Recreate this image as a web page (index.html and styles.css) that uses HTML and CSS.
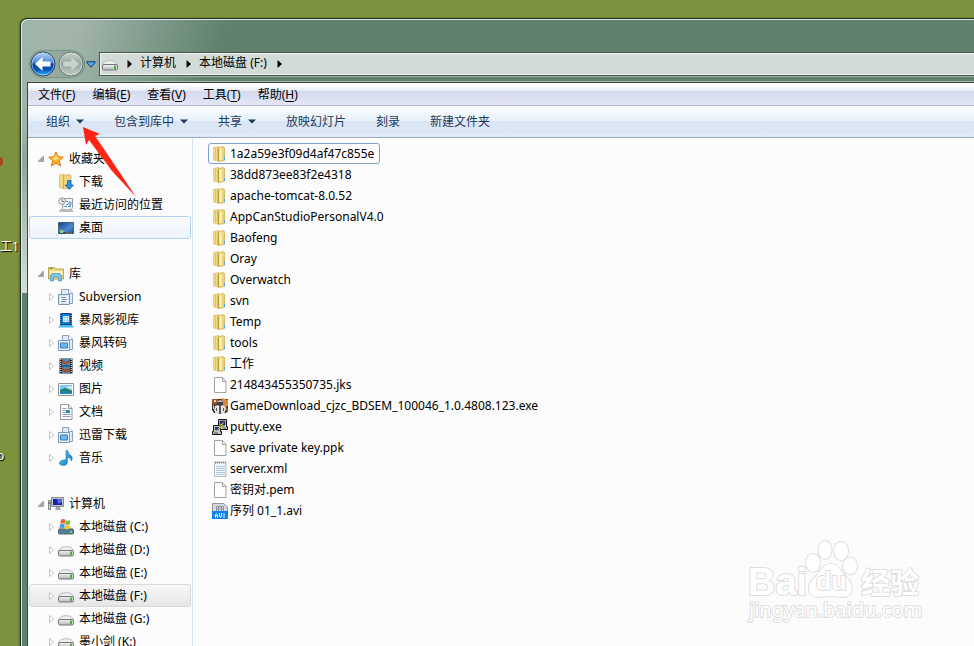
FILE: index.html
```
<!DOCTYPE html>
<html lang="zh-CN">
<head>
<meta charset="utf-8">
<title>本地磁盘 (F:)</title>
<link rel="stylesheet" href="styles.css">
</head>
<body>
<svg class="sprite" aria-hidden="true">
  <defs>
    <linearGradient id="gold" x2="1"><stop offset="0" stop-color="#f8eaa0"/><stop offset=".45" stop-color="#e2c264"/><stop offset=".5" stop-color="#f7e69c"/><stop offset="1" stop-color="#e0b84e"/></linearGradient>
    <linearGradient id="metal" x2="0" y2="1"><stop offset="0" stop-color="#f4f4f6"/><stop offset="1" stop-color="#b4b4bc"/></linearGradient>
    <linearGradient id="blue" x2="0" y2="1"><stop offset="0" stop-color="#b9d8f7"/><stop offset=".45" stop-color="#4b86d4"/><stop offset=".5" stop-color="#0b3fa0"/><stop offset=".75" stop-color="#0a55c2"/><stop offset="1" stop-color="#38c4f6"/></linearGradient>
    <linearGradient id="grey" x2="0" y2="1"><stop offset="0" stop-color="#c9d3cd"/><stop offset=".5" stop-color="#93a69b"/><stop offset="1" stop-color="#c3cec7"/></linearGradient>
    <linearGradient id="note" x2="1" y2="1"><stop offset="0" stop-color="#5cc0f0"/><stop offset="1" stop-color="#1276bd"/></linearGradient>
    <linearGradient id="screen" x2="1" y2="1"><stop offset="0" stop-color="#183c88"/><stop offset=".6" stop-color="#4f8ad4"/><stop offset="1" stop-color="#1e4b98"/></linearGradient>
  </defs>
  <symbol id="folder" viewBox="0 0 16 16"><path d="M1.500 1.500l5-1v14.500l-5-1z" fill="url(#gold)" stroke="#dcc273" stroke-width=".7"/><path d="M6 2l5-1.500 1.500 1v13L6 15.500z" fill="#eed681" stroke="#cda84a" stroke-width=".7"/><path d="M6.500 3v12" stroke="#c29b3d"/><path d="M8.500 2.500v11.500" stroke="#fff4b8" stroke-width="2"/><path d="M12.300 6.500v7" stroke="#d2bb70" stroke-width="1.200"/><path d="M12.500 11v3" stroke="#58a7dc"/></symbol>
  <symbol id="file" viewBox="0 0 16 16"><path d="M2.500.5h8l3.500 3.500v11.500h-11.500z" fill="#fdfdfd" stroke="#a2a2a2"/><path d="M10.500.5v4h3.500" fill="#eee" stroke="#a2a2a2"/></symbol>
  <symbol id="notes" viewBox="0 0 16 16"><path d="M2.500 1.500h11.500v14h-11.500z" fill="#f4f8fc" stroke="#b3b9be"/><path d="M4 5.500h9M4 7.500h9M4 9.500h9M4 11.500h9M4 13.500h9" stroke="#a6c9df"/><path d="M3 1.500h11" stroke="#888" stroke-width="2" stroke-dasharray="1 1"/></symbol>
  <symbol id="avi" viewBox="0 0 16 16"><path d="M.5 8V.5h11l4 3.500v4" fill="#d4d9df" stroke="#8d949c"/><path d="M4.500 3.500h7v5h-7zM6.500 3.500v5M9.500 3.500v5M4.500 6h7" fill="none" stroke="#8d949c"/><path d="M0 8h16v8H0z" fill="#1082ee"/><path d="M3.500 14.500v-3l1-1 1 1v3M3.500 12.500h2M7.500 10v3l1 1.500 1-1.500v-3M12 10v5" fill="none" stroke="#fff"/></symbol>
  <symbol id="game" viewBox="0 0 16 16"><path d="M0 1h16v12l-2 2H2l-2-3z" fill="#3a2a26"/><path d="M0 1h6v4l-4 2-2-2z" fill="#9a5a2c"/><path d="M10 0l6 2v6l-3 1-4-4z" fill="#d88832"/><path d="M12 8l4 2v4l-3-2z" fill="#a7481e"/><path d="M5 4q3-4 6 0v3H5z" fill="#b6bcc2"/><path d="M5 4h6v3H5z" fill="#3c434c"/><path d="M3 8l3-1 2 2 2-2 3 1 1 3-2 5H4l-2-4z" fill="#e2e3e6"/><path d="M7 9h2v7H7zM4 10h1v3H4zM11 10h1v3h-1z" fill="#58575c"/><path d="M1 7h1v4H1zM2 2h2v2H2z" fill="#dbcbbc"/></symbol>
  <symbol id="putty" viewBox="0 0 16 16"><path d="M6.500.5h8v7h1v3h-9z" fill="#c4c4c4" stroke="#111"/><path d="M8 2h5v4H8z" fill="#1830a0" stroke="#222" stroke-width=".5"/><path d="M1.500 6.500h7v6h1v3h-9v-3h1z" fill="#c4c4c4" stroke="#111"/><path d="M3 8h4v3H3z" fill="#1830a0"/><path d="M2 14h4M11 9h3" stroke="#555"/><path d="M13 2.500L6.500 6.500h3L3.500 12l8-4.500h-3z" fill="#fff22a" stroke="#554d00" stroke-width=".3"/></symbol>
  <symbol id="star" viewBox="0 0 16 16"><path d="M8 .8l2.100 4.900 5.200.5-4 3.500 1.300 5.300L8 12.200 3.400 15l1.300-5.300-4-3.500 5.200-.5z" fill="#ffb02b" stroke="#d97a18"/><path d="M8 3l1.300 3.600 3.400.4-6 2-3.200-2 3.200-.4z" fill="#ffe07a"/></symbol>
  <symbol id="download" viewBox="0 0 16 16"><path d="M1.500 1l4-.5v14l-4-1z" fill="url(#gold)" stroke="#d1ad55" stroke-width=".7"/><path d="M5.500 1.500l5-1 2.500 1v12l-7.500 1.500z" fill="#eed681" stroke="#cda84a" stroke-width=".7"/><path d="M9.500 6.500h3.500v4.500h2.500l-4.200 4.500L7 11h2.500z" fill="#2a93e0" stroke="#1767b0" stroke-width=".8"/></symbol>
  <symbol id="recent" viewBox="0 0 16 16"><path d="M5.500 1.500h9v9l-2 4h-10l2-3z" fill="#f2f4f6" stroke="#959ba2"/><path d="M8 4.500h2M11 5h2v3h-2zM8 7.500h2M6 9.500h3M10 9.500h3" stroke="#4e94cc" fill="none"/><path d="M2 12h12l1.500 3H1z" fill="#b9bdc2"/><circle cx="4" cy="4" r="3.300" fill="#f4f5f6" stroke="#8f959c"/><path d="M4 2v2.500h2" fill="none" stroke="#666"/></symbol>
  <symbol id="desktop" viewBox="0 0 16 16"><path d="M.5 2.500h15v11H.5z" fill="url(#screen)" stroke="#55606f"/><path d="M1 12h14v1.500H1z" fill="#2f3a49"/><path d="M1.500 9.500h2v1.500h1.500v2H2z" fill="#55cae8"/><path d="M3.500 10.500h2v2h-2z" fill="#f8c93c"/><path d="M7 13h7" stroke="#9fb0c0" stroke-width=".6"/></symbol>
  <symbol id="library" viewBox="0 0 16 16"><path d="M.5 1.500h6l1 1.500h8v10H.5z" fill="#efd683" stroke="#c3a24c"/><path d="M2 5h13v4H2z" fill="#fff3b3"/><path d="M1.500 2.500h3" stroke="#4da64c"/><path d="M2.500 15v-5.500l1.500-2h8l1.500 2V15h-3v-4h-5v4z" fill="#7bc5ed" stroke="#4e9ccb" stroke-width=".8"/></symbol>
  <symbol id="liblist" viewBox="0 0 16 16"><path d="M3.500 5V.5h7l4 3.500v10.500h-4" fill="#e2ecf6" stroke="#8ba3bd"/><path d="M10.500.5v4h4" fill="#fff" stroke="#8ba3bd"/><path d="M.5 5.500h11v10H.5z" fill="#d9e7f4" stroke="#7997b7"/><path d="M2 7.500h8v6H2z" fill="#f6f9fd"/><path d="M3 8.500h5M4 10.500h5M3 12.500h5" stroke="#7487bc"/></symbol>
  <symbol id="libpic" viewBox="0 0 16 16"><path d="M4.500 5V.5h6l4 3.500v10.500h-4" fill="#e2ecf6" stroke="#8ba3bd"/><path d="M10.500.5v4h4" fill="#fff" stroke="#8ba3bd"/><path d="M.5 5.500h11v10H.5z" fill="#e6f0f9" stroke="#7997b7"/><path d="M2.500 8h7v5h-7z" fill="#6ab6ee" stroke="#3c83bd"/></symbol>
  <symbol id="storm" viewBox="0 0 16 16"><path d="M2 1h12v12H2z" fill="#17436e"/><path d="M2.800 1v11M13.200 1v11" stroke="#9fc6e6" stroke-dasharray="1 1"/><path d="M4 2h8v10H4z" fill="#137bdd"/><path d="M5.500 4.500h5v5h-5zM8 4.500v5M5.500 7h5" fill="#79c6ff" stroke="#fff" stroke-width=".8"/><path d="M2 13h12l2 2.500H0z" fill="#49baf3"/></symbol>
  <symbol id="video" viewBox="0 0 16 16"><path d="M1.500.5h13v15h-13z" fill="#22292d"/><path d="M2.700 1v14M13.300 1v14" stroke="#e1e5e7" stroke-width="1.200" stroke-dasharray="1 1"/><path d="M4 1h8v6.500H4zM4 8.500h8V15H4z" fill="#3994d3"/><path d="M4 1l4 3 4-3v3L8 7 4 5zM4 9l3 2 5-1v3l-4 2-4-2z" fill="#9c5038"/></symbol>
  <symbol id="picture" viewBox="0 0 16 16"><path d="M.5 2.500h15v12H.5z" fill="#fff" stroke="#8d9499"/><path d="M2 4h12v9H2z" fill="#79c9ef"/><path d="M2 9l5-2 7 3v3H2z" fill="#27785d"/><path d="M2 11q6-3 12 1v1H2z" fill="#1b87b7"/><path d="M8 6l4-1 2 1v2z" fill="#dff5ff"/></symbol>
  <symbol id="document" viewBox="0 0 16 16"><path d="M2.500.5h8l3.500 3.500v11.500h-11.500z" fill="#fdfdfd" stroke="#8f979f"/><path d="M10.500.5v4h3.500" fill="#eee" stroke="#8f979f"/><path d="M4.500 4.500h4M4.500 6.500h3M4.500 8.500h3M4.500 10.500h8M4.500 12.500h8" stroke="#939dc5"/><path d="M8 6h4v3H8z" fill="#2789bd"/></symbol>
  <symbol id="music" viewBox="0 0 16 16"><path d="M8 .5h1.500q.5 3 3 4.500 3 2.500 1 6-.5-3-4-4v4.500q0 4-4 4T1.500 13q.5-3.500 6.500-3z" fill="url(#note)" stroke="#2488c6" stroke-width=".7"/></symbol>
  <symbol id="computer" viewBox="0 0 16 16"><path d="M3.500 1.500h12v9h-12z" fill="#bfc3c8" stroke="#888e95"/><path d="M5 3h9v6H5z" fill="#1620a8"/><path d="M9 3h5v3l-4 2z" fill="#5068e2"/><path d="M8 11h4l1 3H7z" fill="#a4a8ae"/><path d="M.5 4.500h2v9h-2z" fill="#dadcda" stroke="#7e8781"/><path d="M1.500 6v2" stroke="#37a53a"/></symbol>
  <symbol id="drive" viewBox="0 0 16 16"><path d="M3 5.500q5-2 10 0l2.500 3h-15z" fill="#eeeef0" stroke="#b0b0b6" stroke-width=".8"/><rect x=".5" y="8.500" width="15" height="5.500" rx="1.500" fill="url(#metal)" stroke="#77777f"/><path d="M12 9.500h2v3.500h-2z" fill="#49b52f"/></symbol>
  <symbol id="system" viewBox="0 0 16 16"><path d="M2 8l2-1h8l3 3H.5z" fill="#c9d1d8"/><rect x=".5" y="10" width="15" height="5" rx="1" fill="#507f9a" stroke="#60676e"/><path d="M12 12h2v2h-2z" fill="#5be35c"/><path d="M3 .8q2-1.500 4.500 0L6.800 4.800q-2-1.200-4.500 0z" fill="#e9642f"/><path d="M8 1.200q2 1 4.500 0l-.8 4q-2 1-4.500 0z" fill="#77bb3e"/><path d="M2.200 5.300q2-1 4.500 0L6 9.200q-2-1.200-4.500 0z" fill="#4a9be2"/><path d="M7.200 5.700q2 1 4.500 0L11 9.800q-2 1-4.500 0z" fill="#f8c832"/></symbol>
  <symbol id="open" viewBox="0 0 8 8"><path d="M6.500 1v5.500H1z" fill="#a5a5a5" stroke="#8c8c8c" stroke-width=".6"/></symbol>
  <symbol id="closed" viewBox="0 0 8 8"><path d="M2.500.5l4 3.500-4 3.500z" fill="#fff" stroke="#c4c4c4"/></symbol>
  <symbol id="down" viewBox="0 0 8 5"><path d="M0 .5h8L4 4.500z" fill="#1e395b"/></symbol>
  <symbol id="right" viewBox="0 0 5 8"><path d="M.5 0v8l4.500-4z" fill="#000"/></symbol>
</svg>

<div class="desk" aria-hidden="true"><i class="spot"></i><span class="label tool">工1</span><span class="label ring">o</span></div>

<main class="window">
  <header class="bar">
    <div class="travel">
      <button aria-label="后退"><svg viewBox="0 0 26 26"><circle cx="13" cy="13" r="12" fill="url(#blue)" stroke="#28486c"/><circle cx="13" cy="13" r="11" fill="none" stroke="#c5dcf5" opacity=".6"/><path d="M5 13l7.500-7v4.500h8v5h-8V20z" fill="#fff"/></svg></button>
      <button aria-label="前进"><svg viewBox="0 0 26 26"><circle cx="13" cy="13" r="12" fill="url(#grey)" stroke="#617168"/><circle cx="13" cy="13" r="11" fill="none" stroke="#dce4df" opacity=".7"/><path d="M21 13l-7.500-7v4.500h-8v5h8V20z" fill="#c9d3cc"/></svg></button>
    </div>
    <button class="recent" aria-label="最近的页面"><svg viewBox="0 0 10 7"><path d="M.8.7h8.400v1L5 6.200.8 1.700z" fill="#4aa5e8" stroke="#173f70"/></svg></button>
    <nav class="address" aria-label="地址">
      <svg class="icon"><use href="#drive"/></svg>
      <svg class="right"><use href="#right"/></svg><a href="#">计算机</a>
      <svg class="right"><use href="#right"/></svg><a href="#">本地磁盘 (F:)</a>
      <svg class="right"><use href="#right"/></svg>
    </nav>
  </header>

  <div class="client">
    <nav class="menu" aria-label="菜单">
      <button>文件(<u>F</u>)</button><button>编辑(<u>E</u>)</button><button>查看(<u>V</u>)</button><button>工具(<u>T</u>)</button><button>帮助(<u>H</u>)</button>
    </nav>
    <div class="tools">
      <button>组织<svg><use href="#down"/></svg></button><button>包含到库中<svg><use href="#down"/></svg></button><button>共享<svg><use href="#down"/></svg></button><button>放映幻灯片</button><button>刻录</button><button>新建文件夹</button>
    </div>
    <div class="panes">
      <nav class="tree" aria-label="导航窗格">
        <section>
          <a href="#" class="root"><svg class="twist"><use href="#open"/></svg><svg class="icon"><use href="#star"/></svg>收藏夹</a>
          <a href="#" class="leaf"><svg class="icon"><use href="#download"/></svg>下载</a>
          <a href="#" class="leaf"><svg class="icon"><use href="#recent"/></svg>最近访问的位置</a>
          <a href="#" class="leaf hot"><svg class="icon"><use href="#desktop"/></svg>桌面</a>
        </section>
        <section>
          <a href="#" class="root"><svg class="twist"><use href="#open"/></svg><svg class="icon"><use href="#library"/></svg>库</a>
          <a href="#"><svg class="twist"><use href="#closed"/></svg><svg class="icon"><use href="#liblist"/></svg>Subversion</a>
          <a href="#"><svg class="twist"><use href="#closed"/></svg><svg class="icon"><use href="#storm"/></svg>暴风影视库</a>
          <a href="#"><svg class="twist"><use href="#closed"/></svg><svg class="icon"><use href="#libpic"/></svg>暴风转码</a>
          <a href="#"><svg class="twist"><use href="#closed"/></svg><svg class="icon"><use href="#video"/></svg>视频</a>
          <a href="#"><svg class="twist"><use href="#closed"/></svg><svg class="icon"><use href="#picture"/></svg>图片</a>
          <a href="#"><svg class="twist"><use href="#closed"/></svg><svg class="icon"><use href="#document"/></svg>文档</a>
          <a href="#"><svg class="twist"><use href="#closed"/></svg><svg class="icon"><use href="#libpic"/></svg>迅雷下载</a>
          <a href="#"><svg class="twist"><use href="#closed"/></svg><svg class="icon"><use href="#music"/></svg>音乐</a>
        </section>
        <section>
          <a href="#" class="root"><svg class="twist"><use href="#open"/></svg><svg class="icon"><use href="#computer"/></svg>计算机</a>
          <a href="#"><svg class="twist"><use href="#closed"/></svg><svg class="icon"><use href="#system"/></svg>本地磁盘 (C:)</a>
          <a href="#"><svg class="twist"><use href="#closed"/></svg><svg class="icon"><use href="#drive"/></svg>本地磁盘 (D:)</a>
          <a href="#"><svg class="twist"><use href="#closed"/></svg><svg class="icon"><use href="#drive"/></svg>本地磁盘 (E:)</a>
          <a href="#" class="current"><svg class="twist"><use href="#closed"/></svg><svg class="icon"><use href="#drive"/></svg>本地磁盘 (F:)</a>
          <a href="#"><svg class="twist"><use href="#closed"/></svg><svg class="icon"><use href="#drive"/></svg>本地磁盘 (G:)</a>
          <a href="#"><svg class="twist"><use href="#closed"/></svg><svg class="icon"><use href="#drive"/></svg>墨小剑 (K:)</a>
        </section>
      </nav>
      <ul class="files">
        <li><a href="#" class="focus"><svg class="icon"><use href="#folder"/></svg>1a2a59e3f09d4af47c855e</a></li>
        <li><a href="#"><svg class="icon"><use href="#folder"/></svg>38dd873ee83f2e4318</a></li>
        <li><a href="#"><svg class="icon"><use href="#folder"/></svg>apache-tomcat-8.0.52</a></li>
        <li><a href="#"><svg class="icon"><use href="#folder"/></svg>AppCanStudioPersonalV4.0</a></li>
        <li><a href="#"><svg class="icon"><use href="#folder"/></svg>Baofeng</a></li>
        <li><a href="#"><svg class="icon"><use href="#folder"/></svg>Oray</a></li>
        <li><a href="#"><svg class="icon"><use href="#folder"/></svg>Overwatch</a></li>
        <li><a href="#"><svg class="icon"><use href="#folder"/></svg>svn</a></li>
        <li><a href="#"><svg class="icon"><use href="#folder"/></svg>Temp</a></li>
        <li><a href="#"><svg class="icon"><use href="#folder"/></svg>tools</a></li>
        <li><a href="#"><svg class="icon"><use href="#folder"/></svg>工作</a></li>
        <li><a href="#"><svg class="icon"><use href="#file"/></svg>214843455350735.jks</a></li>
        <li><a href="#"><svg class="icon"><use href="#game"/></svg>GameDownload_cjzc_BDSEM_100046_1.0.4808.123.exe</a></li>
        <li><a href="#"><svg class="icon"><use href="#putty"/></svg>putty.exe</a></li>
        <li><a href="#"><svg class="icon"><use href="#file"/></svg>save private key.ppk</a></li>
        <li><a href="#"><svg class="icon"><use href="#notes"/></svg>server.xml</a></li>
        <li><a href="#"><svg class="icon"><use href="#file"/></svg>密钥对.pem</a></li>
        <li><a href="#"><svg class="icon"><use href="#avi"/></svg>序列 01_1.avi</a></li>
      </ul>
    </div>
  </div>
</main>

<svg class="pointer" viewBox="0 0 54 72" aria-hidden="true"><path d="M1 1l17 7-5 2 13 19 28 42L30 45 7 14l-3 5z" fill="#ff2414"/></svg>

<svg class="mark" viewBox="0 0 184 90">
  <g class="ink">
    <ellipse cx="70" cy="33" rx="7" ry="9"/><ellipse cx="82" cy="20" rx="6.500" ry="9"/><ellipse cx="98" cy="21" rx="7" ry="9"/><ellipse cx="107" cy="36" rx="7" ry="8.500"/>
    <path d="M88 34c8 0 10 8 16 14 6 5 8 18-3 19-5 0-8-1-13-1s-9 1-14 1c-11-1-9-14-3-19 7-6 9-14 17-14z"/>
    <text x="5" y="65" class="big">Bai</text><text x="73" y="60" class="du">du</text><text x="118" y="64" class="cn">经验</text><text x="6" y="87" class="url">jingyan.baidu.com</text>
  </g>
</svg>
</body>
</html>
```
FILE: styles.css
```
* { box-sizing: border-box; }

body {
  margin: 0;
  height: 100vh;
  padding: 18px 0 0 20px;
  overflow: hidden;
  position: relative;
  background: #7c923c;
  color: #000;
  font: 12px/20px "Noto Sans", "Noto Sans CJK SC", sans-serif;
}

a { color: inherit; text-decoration: none; }

button {
  padding: 0;
  border: 0;
  background: none;
  color: inherit;
  font: inherit;
}

svg { display: block; flex: none; }
.sprite { position: absolute; width: 0; height: 0; }
.icon { width: 16px; height: 16px; }

/* Window frame */
.window {
  height: 100%;
  display: flex;
  flex-direction: column;
  padding-left: 6px;
  border: solid #1f2f27;
  border-width: 1px 0 0 1px;
  border-radius: 7px 0 0 0;
  box-shadow: inset 1px 1px #dde8e1, -1px 0 2px #5b6c2e;
  background:
    linear-gradient(#c3cfc800 110px, #8ea699 140px, #d5dfd9 274px, #5f816d 274px) 0 0 / 6px 100% no-repeat,
    linear-gradient(105deg, #a0b4a8 60px, #5f816d 200px);
}

.bar {
  display: flex;
  align-items: center;
  padding: 32px 0 5px 3px;
}

.travel {
  display: flex;
  gap: 2px;
  border-radius: 13px;
  background: #8a9e9280;
  box-shadow: 0 0 1px 1px #7d9286;
}

.travel svg { width: 26px; height: 26px; }
.recent { padding: 0 3px 0 2px; }
.recent svg { width: 10px; height: 7px; }

.address {
  flex: 1;
  height: 24px;
  display: flex;
  align-items: center;
  padding-left: 2px;
  border: solid #46534c;
  border-width: 1px 0 1px 1px;
  box-shadow: inset 1px 1px #f4f7f5, inset 0 -1px #f4f7f5, 0 1px #9fb3a7;
  background: #d3dbd7;
}

.address a { padding: 0 10px 2px 8px; }
.address .icon { margin-right: 9px; }
.right { width: 5px; height: 8px; }

.client {
  flex: 1;
  min-height: 0;
  display: flex;
  flex-direction: column;
  border: solid #35453c;
  border-width: 1px 0 0 1px;
  box-shadow: 0 -1px #a9bcb0;
  background: #fcfcfc;
}

.menu {
  display: flex;
  gap: 17px;
  height: 23px;
  padding: 2px 0 0 10px;
  border-bottom: 1px solid #b2b9cf;
  background: linear-gradient(#fff 2px, #e5eaf5 8px, #d4daed 8px, #e3e6f6);
}

.menu u { text-underline-offset: 2px; }

.tools {
  display: flex;
  gap: 30px;
  height: 32px;
  padding-left: 18px;
  border-bottom: 1px solid #a0afc3;
  background: linear-gradient(#fcfeff, #e5f0fa 15px, #dae6f5 15px, #dce7f5 29px, #e8f2fb 30px, #cddaea 31px);
  color: #1e395b;
}

.tools button { display: flex; align-items: center; gap: 6px; }
.tools svg { width: 8px; height: 5px; }

.panes { flex: 1; min-height: 0; display: flex; }

/* Navigation tree */
.tree {
  width: 165px;
  flex: none;
  display: flex;
  flex-direction: column;
  gap: 23px;
  padding: 9px 1px 0 1px;
  overflow: hidden;
  border-right: 1px solid #d6e5f5;
}

.tree a {
  display: flex;
  align-items: center;
  height: 23px;
  padding-left: 17px;
  border: 1px solid transparent;
  border-radius: 3px;
  white-space: nowrap;
}

.tree .root { padding-left: 7px; }
.tree .leaf { padding-left: 28px; }
.twist { width: 8px; height: 8px; margin-right: 3px; }
.tree .icon { margin-right: 5px; }
.tree .hot { border-color: #b4d2f3; background: linear-gradient(#fafcfe, #edf4fc); }
.tree .current { border-color: #d9d9d9; background: linear-gradient(#f8f8f8, #e6e6e6); }

/* File list */
.files { margin: 0; padding: 5px 15px; list-style: none; }
.files li { height: 21px; display: flex; }

.files a {
  display: flex;
  align-items: center;
  gap: 2px;
  padding: 0 5px 0 3px;
  border: 1px solid transparent;
  border-radius: 3px;
}

.files .focus { border-color: #7da2ce; }

/* Items lying over the desktop and the window */
.spot, .label, .pointer, .mark { position: absolute; }
.spot { left: -4px; top: 157px; width: 7px; height: 9px; border-radius: 50%; background: #a0481c; }
.label { color: #fff; text-shadow: 1px 1px 1px #000; }
.tool { left: 0; top: 237px; width: 20px; overflow: hidden; white-space: nowrap; }
.ring { left: -3px; top: 446px; }
.pointer { left: 82px; top: 126px; width: 54px; height: 72px; }
.mark { right: 47px; bottom: 26px; width: 184px; height: 90px; overflow: visible; }

.ink { fill: #fff; stroke: #dedede; stroke-width: 2px; paint-order: stroke; stroke-linejoin: round; }
.big { font: bold 38px "Liberation Sans", sans-serif; }
.du { font: bold 25px "Liberation Sans", sans-serif; }
.cn { font: bold 29px "Noto Sans CJK SC", sans-serif; }
.url { font: 20px "Noto Sans", sans-serif; }
```
